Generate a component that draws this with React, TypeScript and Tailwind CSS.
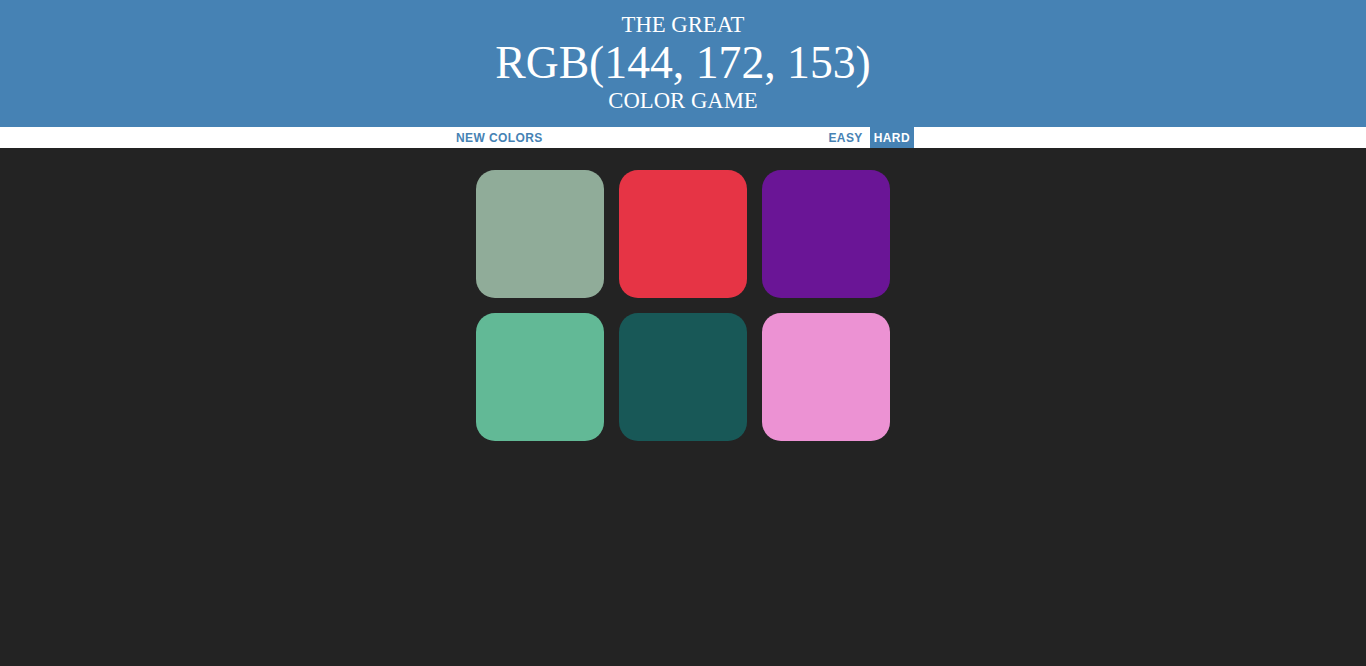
import { useState } from 'react';

const colors = [
  'rgb(144, 172, 153)',
  'rgb(230, 52, 69)',
  'rgb(106, 21, 150)',
  'rgb(98, 185, 150)',
  'rgb(24, 88, 87)',
  'rgb(236, 146, 211)',
];

export default function App() {
  const [hard, setHard] = useState(true);

  return (
    <div className="min-h-screen bg-[#232323]">
      <h1 className="bg-[#4682b4] text-white text-center font-['Liberation_Serif',serif] font-normal pt-[12px] pb-[13px] leading-none">
        <div className="text-[22.7px] leading-[26px]">THE GREAT</div>
        <div className="text-[45.7px] leading-[50px]">RGB(144, 172, 153)</div>
        <div className="text-[22.7px] leading-[26px]">COLOR GAME</div>
      </h1>

      <div className="bg-white h-[21px]">
        <div className="w-[462px] mx-auto pl-[4px] h-full flex justify-between items-stretch font-['Liberation_Sans',Arial,sans-serif] font-bold text-[12px] tracking-[0.4px] text-[#4682b4]">
          <button className="uppercase">New Colors</button>
          <div className="flex gap-[3px]">
            <button
              onClick={() => setHard(false)}
              className={`px-[4px] uppercase ${!hard ? 'bg-[#4682b4] text-white' : ''}`}
            >
              Easy
            </button>
            <button
              onClick={() => setHard(true)}
              className={`px-[4px] uppercase ${hard ? 'bg-[#4682b4] text-white' : ''}`}
            >
              Hard
            </button>
          </div>
        </div>
      </div>

      <div className="w-[414px] mx-auto mt-[22px] grid grid-cols-3 gap-[15px]">
        {colors.map((c, i) => (
          <div key={i} className="h-[128px] rounded-[19px]" style={{ background: c }} />
        ))}
      </div>
    </div>
  );
}
